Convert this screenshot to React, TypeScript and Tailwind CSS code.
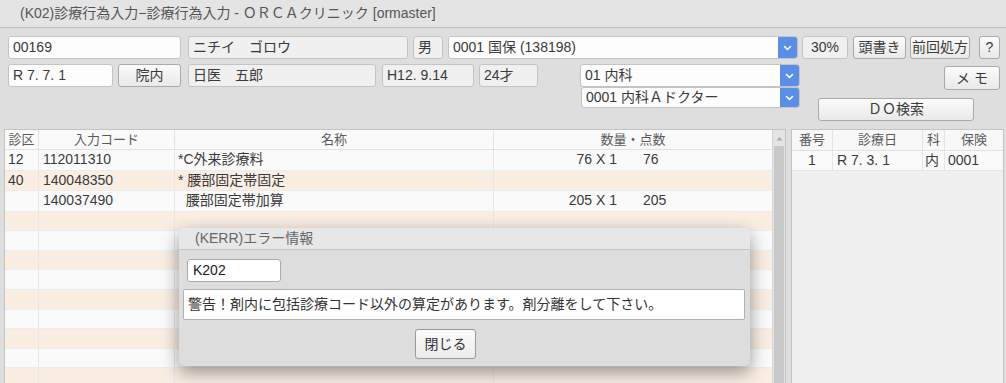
import React from 'react';

const font = { fontFamily: '"Liberation Sans", "Noto Sans CJK JP", sans-serif' };

type Row = { ku: string; code: string; name: string; qty: string; pt: string };

const rows: Row[] = [
  { ku: '12', code: '112011310', name: '*C外来診療料', qty: '76 X 1', pt: '76' },
  { ku: '40', code: '140048350', name: '* 腰部固定帯固定', qty: '', pt: '' },
  { ku: '', code: '140037490', name: '\u00a0\u00a0腰部固定帯加算', qty: '205 X 1', pt: '205' },
];

const Field: React.FC<{ w: string; ro?: boolean; children?: React.ReactNode }> = ({ w, ro, children }) => (
  <div
    className={`${w} h-[23px] flex items-center px-[4px] rounded-[3px] border border-[#c4c4c4] text-[14px] text-[#3a3a3a] whitespace-nowrap overflow-hidden ${
      ro ? 'bg-[#f0f0f0]' : 'bg-[#fdfdfd]'
    }`}
  >
    {children}
  </div>
);

const Btn: React.FC<{ w: string; h?: string; children: React.ReactNode }> = ({ w, h = 'h-[23px]', children }) => (
  <div
    className={`${w} ${h} flex items-center justify-center rounded-[3px] border border-[#a9a9a9] bg-gradient-to-b from-[#fbfbfb] to-[#e9e9e9] text-[14px] text-[#3a3a3a] whitespace-nowrap`}
  >
    {children}
  </div>
);

const Chevron = () => (
  <svg width="9" height="6" viewBox="0 0 9 6" fill="none">
    <path d="M1.5 1.5 L4.5 4.5 L7.5 1.5" stroke="white" strokeWidth="1.6" strokeLinecap="round" strokeLinejoin="round" />
  </svg>
);

const Select: React.FC<{ w: string; h: string; children: React.ReactNode }> = ({ w, h, children }) => (
  <div className={`${w} ${h} flex rounded-[3px] border border-[#c4c4c4] bg-[#fdfdfd] overflow-hidden`}>
    <div className="flex-1 flex items-center px-[4px] text-[14px] text-[#3a3a3a] whitespace-nowrap">{children}</div>
    <div className="w-[19px] flex items-center justify-center bg-[#5b8ee6]">
      <Chevron />
    </div>
  </div>
);

export default function App() {
  return (
    <div className="relative w-[1006px] h-[383px] overflow-hidden bg-[#dedede]" style={font}>
      {/* title */}
      <div className="h-[28px] flex items-center pl-[20px] bg-[#e4e4e4] border-b border-[#bdbdbd] text-[14px] text-[#555]">
        (K02)診療行為入力−診療行為入力 - ＯＲＣＡクリニック [ormaster]
      </div>

      {/* patient header */}
      <div className="h-[101px] pt-[8px]">
        <div className="flex items-center">
          <div className="ml-[8px]"><Field w="w-[173px]">00169</Field></div>
          <div className="ml-[7px]"><Field w="w-[220px]" ro>ニチイ　ゴロウ</Field></div>
          <div className="ml-[5px]"><Field w="w-[30px]" ro>男</Field></div>
          <div className="ml-[5px]"><Select w="w-[350px]" h="h-[23px]">0001 国保 (138198)</Select></div>
          <div className="ml-[4px]"><Field w="w-[46px]" ro><span className="w-full text-center">30%</span></Field></div>
          <div className="ml-[5px]"><Btn w="w-[53px]">頭書き</Btn></div>
          <div className="ml-[4px]"><Btn w="w-[60px]">前回処方</Btn></div>
          <div className="ml-[9px]"><Btn w="w-[21px]">?</Btn></div>
        </div>

        <div className="flex mt-[5px]">
          <div className="flex items-start">
            <div className="ml-[8px]"><Field w="w-[105px]">R 7. 7. 1</Field></div>
            <div className="ml-[5px]"><Btn w="w-[63px]">院内</Btn></div>
            <div className="ml-[7px]"><Field w="w-[188px]" ro>日医　五郎</Field></div>
            <div className="ml-[6px]"><Field w="w-[92px]" ro>H12. 9.14</Field></div>
            <div className="ml-[5px]"><Field w="w-[59px]" ro>24才</Field></div>
          </div>
          <div className="ml-[42px] flex flex-col">
            <Select w="w-[220px]" h="h-[23px]">01 内科</Select>
            <div className="ml-[1px]"><Select w="w-[219px]" h="h-[21px]">0001 内科Ａドクター</Select></div>
          </div>
          <div className="ml-[18px] w-[182px] flex flex-col">
            <div className="self-end mt-[2px]"><Btn w="w-[56px]" h="h-[24px]">メ モ</Btn></div>
            <div className="mt-[8px]"><Btn w="w-[156px]">ＤＯ検索</Btn></div>
          </div>
        </div>
      </div>

      {/* main */}
      <div className="flex pl-[4px] gap-[5px]">
        {/* left table */}
        <div className="w-[782px] h-[260px] flex border border-[#c4c4c4] bg-[#fafafa]">
          <div className="flex-1 flex flex-col">
            <div className="flex h-[20px] border-b border-[#e2e2e2] text-[13px] text-[#5a5a5a]">
              <div className="w-[34px] flex items-center justify-center border-r border-[#e2e2e2]">診区</div>
              <div className="w-[136px] flex items-center justify-center border-r border-[#e2e2e2]">入力コード</div>
              <div className="w-[319px] flex items-center justify-center border-r border-[#e2e2e2]">名称</div>
              <div className="flex-1 flex items-center justify-center">数量・点数</div>
            </div>
            {Array.from({ length: 12 }).map((_, i) => {
              const r = rows[i];
              return (
                <div
                  key={i}
                  className={`flex h-[20.5px] border-b border-[#ececec] text-[14px] text-[#3a3a3a] ${
                    i % 2 === 1 ? 'bg-[#faede2]' : 'bg-[#fafafa]'
                  }`}
                >
                  <div className="w-[34px] flex items-center pl-[3px] border-r border-[#e6e6e6]">{r?.ku}</div>
                  <div className="w-[136px] flex items-center pl-[4px] border-r border-[#e6e6e6]">{r?.code}</div>
                  <div className="w-[319px] flex items-center pl-[3px] border-r border-[#e6e6e6] whitespace-pre">{r?.name}</div>
                  <div className="flex-1 flex items-center">
                    <span className="w-[123px] text-right">{r?.qty}</span>
                    <span className="ml-[26px]">{r?.pt}</span>
                  </div>
                </div>
              );
            })}
          </div>
          {/* scrollbar */}
          <div className="w-[13px] flex flex-col bg-[#e4e4e4] border-l border-[#d6d6d6]">
            <div className="h-[16px] flex items-center justify-center">
              <svg width="7" height="5" viewBox="0 0 7 5">
                <path d="M0.5 4.5 L3.5 1 L6.5 4.5 Z" fill="#aaa" />
              </svg>
            </div>
            <div className="flex-1 mx-[1px] bg-[#c9c9c9]" />
          </div>
        </div>

        {/* right history */}
        <div className="w-[213px] h-[260px] flex flex-col border border-[#c4c4c4] bg-[#f0f0f0]">
          <div className="flex h-[21px] bg-[#f8f8f8] border-b border-[#e2e2e2] text-[13px] text-[#5a5a5a]">
            <div className="w-[41px] flex items-center justify-center border-r border-[#e2e2e2]">番号</div>
            <div className="w-[90px] flex items-center justify-center border-r border-[#e2e2e2]">診療日</div>
            <div className="w-[22px] flex items-center justify-center border-r border-[#e2e2e2]">科</div>
            <div className="flex-1 flex items-center justify-center">保険</div>
          </div>
          <div className="flex h-[20px] bg-[#fafafa] border-b border-[#e6e6e6] text-[14px] text-[#3a3a3a]">
            <div className="w-[41px] flex items-center justify-center border-r border-[#e6e6e6]">1</div>
            <div className="w-[90px] flex items-center pl-[4px] border-r border-[#e6e6e6]">R 7. 3. 1</div>
            <div className="w-[22px] flex items-center pl-[2px] border-r border-[#e6e6e6]">内</div>
            <div className="flex-1 flex items-center pl-[3px]">0001</div>
          </div>
        </div>
      </div>

      {/* error dialog */}
      <div className="absolute left-[179px] top-[228px] w-[571px] h-[138px] flex flex-col rounded-[5px] bg-[#dddddd] shadow-[0_6px_18px_rgba(0,0,0,0.4)] overflow-hidden">
        <div className="h-[22px] flex items-center pl-[16px] bg-[#e7e7e7] border-b border-[#c6c6c6] text-[14px] text-[#666]">
          (KERR)エラー情報
        </div>
        <div className="ml-[8px] mt-[9px] w-[94px] h-[23px] flex items-center px-[5px] rounded-[3px] border border-[#aaa] bg-white text-[14px] text-[#222]">
          K202
        </div>
        <div className="ml-[4px] mt-[7px] w-[562px] h-[31px] flex items-center px-[4px] rounded-[2px] border border-[#b2b2b2] bg-white text-[14px] text-[#333]">
          警告！剤内に包括診療コード以外の算定があります。剤分離をして下さい。
        </div>
        <div className="ml-[236px] mt-[9px] w-[61px] h-[30px] flex items-center justify-center rounded-[3px] border border-[#999] bg-gradient-to-b from-[#fbfbfb] to-[#ebebeb] text-[14px] text-[#333]">
          閉じる
        </div>
      </div>
    </div>
  );
}
